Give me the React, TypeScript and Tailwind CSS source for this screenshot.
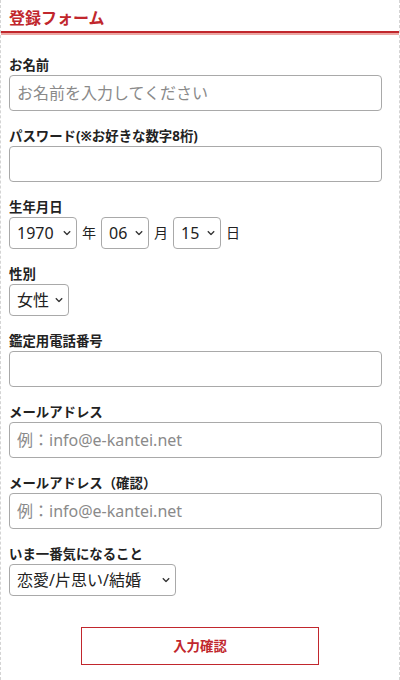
import React from "react";

const font = {
  fontFamily: '"Noto Sans", "Noto Sans CJK JP", sans-serif',
};

const Chevron = () => (
  <svg
    width="8"
    height="5"
    viewBox="0 0 8 5"
    className="pointer-events-none absolute right-[6px] top-1/2 -translate-y-1/2"
  >
    <path d="M0.8 0.8 L4 4 L7.2 0.8" fill="none" stroke="#333" strokeWidth="1.3" />
  </svg>
);

const Select = ({
  value,
  options,
  width,
}: {
  value: string;
  options: string[];
  width: string;
}) => (
  <div className={`relative ${width}`}>
    <select
      defaultValue={value}
      className="h-[32px] w-full appearance-none rounded-[4px] border border-[#a9a9a9] bg-white pl-[7px] pr-[16px] text-[16px] leading-[20px] text-[#222] outline-none"
      style={font}
    >
      {options.map((o) => (
        <option key={o}>{o}</option>
      ))}
    </select>
    <Chevron />
  </div>
);

const Label = ({ children }: { children: React.ReactNode }) => (
  <div className="mb-[1px] h-[18px] text-[13.4px] font-bold leading-[18px] text-[#222]">
    {children}
  </div>
);

const TextInput = ({ placeholder, type = "text" }: { placeholder?: string; type?: string }) => (
  <input
    type={type}
    placeholder={placeholder}
    className="block h-[36px] w-[373px] rounded-[4px] border border-[#a9a9a9] bg-white px-[7px] text-[16px] text-[#222] outline-none placeholder:text-[#8a8a8a]"
    style={font}
  />
);

export default function App() {
  return (
    <div
      className="min-h-[680px] w-[400px] border-x border-dashed border-[#d4d4d4] bg-white"
      style={font}
    >
      <div className="h-[31px] px-[8px] pt-[8px] text-[16px] font-bold leading-[20px] text-[#c1272d]">
        登録フォーム
      </div>
      <div className="h-[2px] bg-[#c1272d]" />
      <div className="h-[2px] bg-[#eca7a4]" />

      <form className="flex flex-col gap-[16px] px-[8px] pt-[21px]" onSubmit={(e) => e.preventDefault()}>
        <div>
          <Label>お名前</Label>
          <TextInput placeholder="お名前を入力してください" />
        </div>

        <div>
          <Label>パスワード(※お好きな数字8桁)</Label>
          <TextInput type="password" />
        </div>

        <div>
          <Label>生年月日</Label>
          <div className="flex items-center text-[14px] leading-[20px] text-[#222]">
            <Select value="1970" options={["1969", "1970", "1971"]} width="w-[68px]" />
            <span className="mx-[5px]">年</span>
            <Select value="06" options={["05", "06", "07"]} width="w-[48px]" />
            <span className="mx-[5px]">月</span>
            <Select value="15" options={["14", "15", "16"]} width="w-[48px]" />
            <span className="ml-[5px]">日</span>
          </div>
        </div>

        <div>
          <Label>性別</Label>
          <Select value="女性" options={["男性", "女性"]} width="w-[60px]" />
        </div>

        <div>
          <Label>鑑定用電話番号</Label>
          <TextInput type="tel" />
        </div>

        <div>
          <Label>メールアドレス</Label>
          <TextInput type="email" placeholder="例：info@e-kantei.net" />
        </div>

        <div>
          <Label>メールアドレス（確認）</Label>
          <TextInput type="email" placeholder="例：info@e-kantei.net" />
        </div>

        <div>
          <Label>いま一番気になること</Label>
          <Select
            value="恋愛/片思い/結婚"
            options={["恋愛/片思い/結婚", "仕事/転職", "人間関係", "金運"]}
            width="w-[167px]"
          />
        </div>

        <div className="flex justify-center pt-[15px]">
          <button
            type="submit"
            className="h-[38px] w-[238px] border border-[#c1272d] bg-white text-[13.4px] font-bold text-[#c1272d]"
            style={font}
          >
            入力確認
          </button>
        </div>
      </form>
    </div>
  );
}
